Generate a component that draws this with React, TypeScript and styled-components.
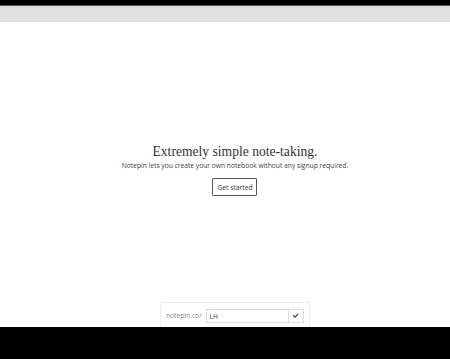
import styled, { createGlobalStyle } from "styled-components";
import { FaCheck } from "react-icons/fa";

const GlobalStyle = createGlobalStyle`
  html, body {
    margin: 0;
    padding: 0;
    background: #000;
  }
  * {
    box-sizing: border-box;
  }
`;

const Screen = styled.div`
  display: flex;
  flex-direction: column;
  width: 450px;
  height: 359px;
  overflow: hidden;
  background: #000;
`;

const TopEdge = styled.div`
  flex-shrink: 0;
  height: 6px;
  background: #000;
  border-bottom: 1px solid #555;
`;

const ChromeBar = styled.div`
  flex-shrink: 0;
  height: 16px;
  background: #e0e0e0;
`;

const Page = styled.main`
  display: flex;
  flex-direction: column;
  align-items: center;
  flex-shrink: 0;
  height: 305px;
  padding-left: 20px;
  overflow: hidden;
  background: #fff;
`;

const Hero = styled.section`
  display: flex;
  flex-direction: column;
  align-items: center;
  justify-content: center;
  flex-shrink: 0;
  height: 280px;
  padding-top: 15px;
`;

const Heading = styled.h1`
  margin: 0;
  color: #333;
  font-family: "Liberation Serif", "Times New Roman", serif;
  font-size: 13.6px;
  font-weight: 400;
  line-height: 17px;
`;

const Lead = styled.p`
  margin: 1px 0 0;
  color: #444;
  font-family: "Open Sans", sans-serif;
  font-size: 6.7px;
  line-height: 10px;
`;

const StartButton = styled.button`
  margin-top: 7px;
  width: 45px;
  height: 18px;
  padding: 0;
  border: 1px solid #555;
  border-radius: 1px;
  background: #fff;
  color: #333;
  font-family: "Open Sans", sans-serif;
  font-size: 6.7px;
`;

const ClaimPanel = styled.form`
  display: flex;
  align-items: flex-start;
  gap: 4px;
  flex-shrink: 0;
  width: 150px;
  height: 32px;
  padding: 6px 5px 0 5px;
  border: 1px solid #eee;
`;

const Prefix = styled.span`
  flex-shrink: 0;
  color: #888;
  font-family: "Open Sans", sans-serif;
  font-size: 6.7px;
  line-height: 14px;
`;

const InputGroup = styled.div`
  display: flex;
  flex: 1;
  min-width: 0;
  height: 14px;
  border: 1px solid #ddd;
`;

const NameInput = styled.input`
  flex: 1;
  width: 0;
  min-width: 0;
  padding: 0 3px;
  border: 0;
  outline: none;
  background: #fff;
  color: #333;
  font-family: "Open Sans", sans-serif;
  font-size: 6.7px;
`;

const CheckButton = styled.button`
  display: grid;
  place-items: center;
  flex-shrink: 0;
  width: 15px;
  padding: 0;
  border: 0;
  border-left: 1px solid #ddd;
  background: #fff;
  color: #333;
  font-size: 5.5px;
`;

const BottomEdge = styled.div`
  flex: 1;
  background: #000;
`;

export default function App() {
  return (
    <>
      <GlobalStyle />
      <Screen>
        <TopEdge />
        <ChromeBar />
        <Page>
          <Hero>
            <Heading>Extremely simple note-taking.</Heading>
            <Lead>
              Notepin lets you create your own notebook without any signup
              required.
            </Lead>
            <StartButton type="button">Get started</StartButton>
          </Hero>
          <ClaimPanel onSubmit={(e) => e.preventDefault()}>
            <Prefix>notepin.co/</Prefix>
            <InputGroup>
              <NameInput defaultValue="LH" />
              <CheckButton type="submit">
                <FaCheck />
              </CheckButton>
            </InputGroup>
          </ClaimPanel>
        </Page>
        <BottomEdge />
      </Screen>
    </>
  );
}
